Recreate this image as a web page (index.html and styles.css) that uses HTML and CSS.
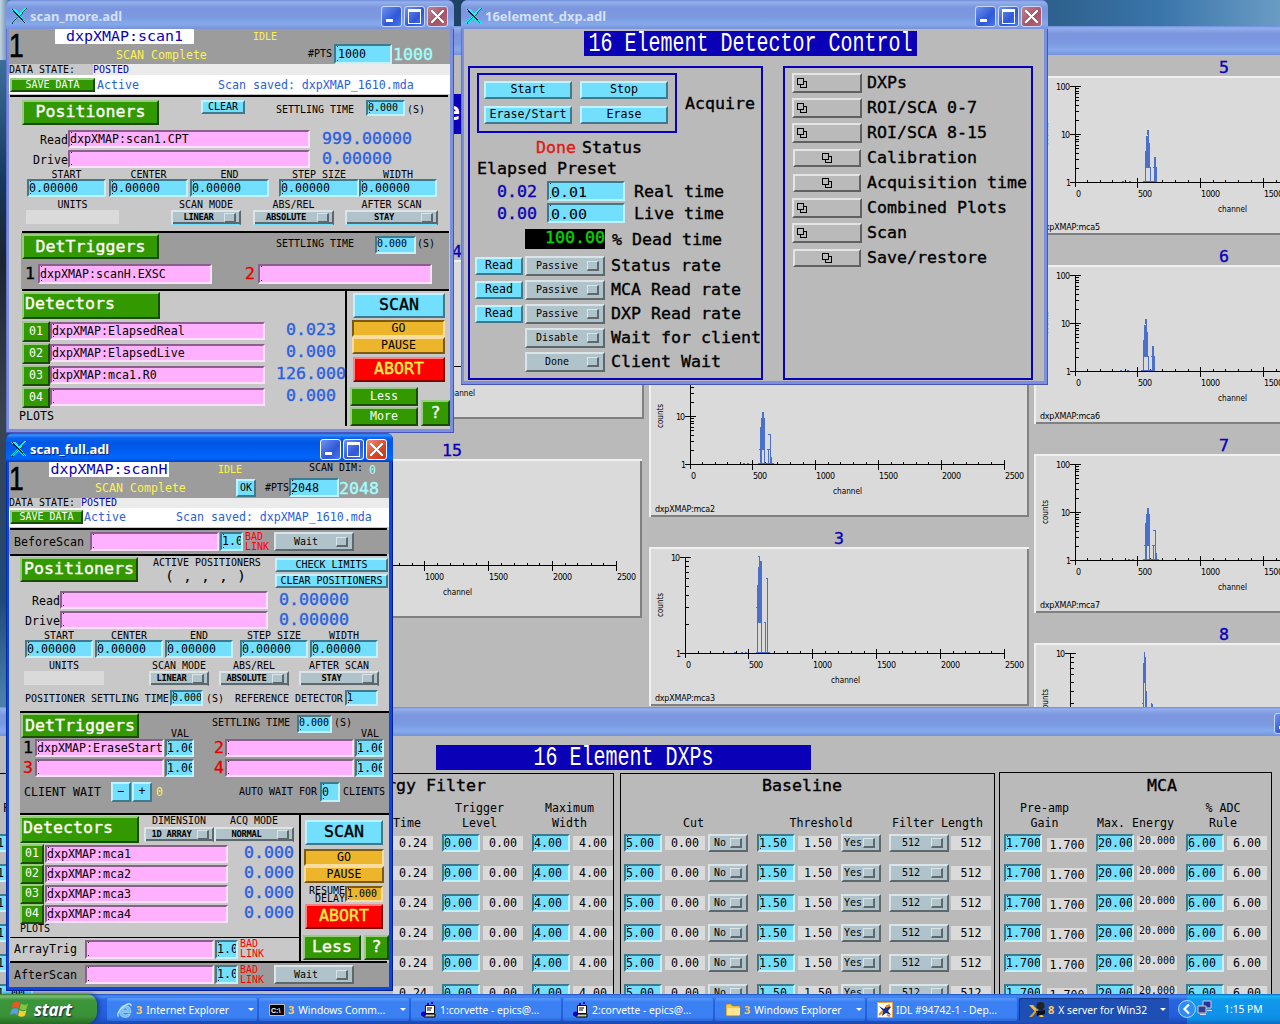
FILE: index.html
```html
<!DOCTYPE html>
<html lang="en">
<head>
<meta charset="utf-8">
<title>Beamline desktop</title>
<link rel="stylesheet" href="styles.css">
</head>
<body>
<svg width="0" height="0" class="defs">
  <defs>
    <g id="xlogo"><path d="M0 1h5l10 14h-3z" fill="#0ff"/><path d="M13 0h3L3 15H0z" fill="#0ff"/><path d="M1 1l13 14" stroke="#022" stroke-width="1.200" fill="none"/><path d="M15.500 0L9 8M7 9l-6 6.500" stroke="#022" stroke-width=".8" fill="none"/></g>
    <g id="stack"><path d="M.5 .5h6v6h-6zM3.500 6.500v3h6v-6h-3" fill="none" stroke="#000"/></g>
    <g id="peak-a" fill="#4a70cc"><path d="M111 69h1v37h-1zM112 60h4v32h-4zM113 54h2v10h-2zM115 65h1v41h-1zM112 92h1v14h-1zM110 91h2v1h-2zM119 76h2v1h-2zM121 76h1v30h-1zM118 91h3v1h-3zM119 91h1v15h-1zM122 99h1v7h-1zM109 105h16v1h-16zM94 105h2v1h-2zM98 105h2v1h-2z"/></g>
    <g id="peak-b" fill="#4a70cc"><path d="M113 54h1v5h-1zM114 54h1v38h-1zM112 60h2v32h-2zM111 75h1v31h-1zM115 67h1v25h-1zM116 91h1v15h-1zM120 81h2v25h-2zM122 91h1v15h-1zM119 91h2v1h-2zM109 105h12v1h-12zM88 105h2v1h-2zM95 105h2v1h-2z"/></g>
    <g id="peak-c" fill="#4a70cc"><path d="M109 9h2v1h-2zM110 9h1v67h-1zM111 14h2v62h-2zM109 20h1v56h-1zM108 38h1v68h-1zM107 60h2v1h-2zM112 14h1v92h-1zM116 76h1v30h-1zM115 75h2v1h-2zM118 31h1v75h-1zM117 31h2v1h-2zM107 105h14v1h-14zM85 105h2v1h-2zM92 105h2v1h-2zM96 105h2v1h-2z"/></g>
    <g id="peak-d" fill="#4a70cc"><path d="M110 9h1v30h-1zM109 20h2v20h-2zM111 14h1v50h-1zM109 30h1v40h-1zM108 60h2v1h-2zM112 48h1v20h-1zM117 60h1v20h-1zM118 61h1v10h-1z"/></g>
    <g id="axis-hundred">
      <path d="M41.500 10V111M36 106.500H355.500M36 10.500H47M36 58.500H47M103.500 102v10M166.500 102v10M229.500 102v10M292.500 102v10M355.500 102v10M42 92.500h3M42 83.500h3M42 77.500h3M42 72.500h3M42 69.500h3M42 65.500h3M42 63.500h3M42 60.500h3M42 44.500h3M42 35.500h3M42 29.500h3M42 24.500h3M42 21.500h3M42 17.500h3M42 15.500h3M42 12.500h3M53.500 104v3M66.500 104v3M78.500 104v3M91.500 104v3M116.500 104v3M128.500 104v3M141.500 104v3M154.500 104v3M179.500 104v3M191.500 104v3M204.500 104v3M217.500 104v3M242.500 104v3M254.500 104v3M267.500 104v3M279.500 104v3M304.500 104v3M317.500 104v3M329.500 104v3M342.500 104v3" class="axis"/>
      <g class="ticks"><text x="22" y="13.500" textLength="14">100</text><text x="27" y="61.500" textLength="9">10</text><text x="32" y="109.500">1</text>
      <text x="42" y="120.500">0</text><text x="104" y="120.500" textLength="14">500</text><text x="167" y="120.500" textLength="19">1000</text><text x="230" y="120.500" textLength="19">1500</text><text x="293" y="120.500" textLength="19">2000</text><text x="356" y="120.500" textLength="19">2500</text>
      <text x="184" y="135.500" textLength="29" lengthAdjust="spacingAndGlyphs">channel</text><text transform="translate(14 70) rotate(-90)" textLength="24" lengthAdjust="spacingAndGlyphs">counts</text></g>
    </g>
    <g id="axis-ten">
      <path d="M36.500 10V111M31 106.500H355.500M31 10.500H42M99.500 102v10M163.500 102v10M227.500 102v10M291.500 102v10M355.500 102v10M37 77.500h3M37 60.500h3M37 48.500h3M37 39.500h3M37 31.500h3M37 25.500h3M37 19.500h3M37 14.500h3M49.500 104v3M61.500 104v3M74.500 104v3M87.500 104v3M112.500 104v3M125.500 104v3M138.500 104v3M151.500 104v3M176.500 104v3M189.500 104v3M202.500 104v3M215.500 104v3M240.500 104v3M253.500 104v3M266.500 104v3M278.500 104v3M304.500 104v3M316.500 104v3M330.500 104v3M342.500 104v3" class="axis"/>
      <g class="ticks"><text x="22" y="13.500" textLength="9">10</text><text x="27" y="109.500">1</text>
      <text x="37" y="120.500">0</text><text x="100" y="120.500" textLength="14">500</text><text x="164" y="120.500" textLength="19">1000</text><text x="228" y="120.500" textLength="19">1500</text><text x="292" y="120.500" textLength="19">2000</text><text x="356" y="120.500" textLength="19">2500</text>
      <text x="182" y="135.500" textLength="29" lengthAdjust="spacingAndGlyphs">channel</text><text transform="translate(14 70) rotate(-90)" textLength="24" lengthAdjust="spacingAndGlyphs">counts</text></g>
    </g>
  </defs>
</svg>

<main class="desktop">

<section class="window spectra">
  <header class="titlebar"></header>
  <div class="spectra-body">
    <div class="plots plots-left">
      <div class="banner-edge">e</div>
      <div class="plot-no no14">14</div>
      <svg class="plot shift" viewBox="0 0 380 159"><use href="#axis-ten"/></svg>
      <div class="plot-no no15">15</div>
      <svg class="plot" viewBox="0 0 380 159"><use href="#axis-ten" x="-1"/></svg>
    </div>
    <div class="plots plots-mid">
      <div class="plot-no">2</div>
      <svg class="plot" viewBox="0 0 380 159"><use href="#axis-hundred"/><use href="#peak-a"/><text class="pv" x="6" y="153.500" textLength="60">dxpXMAP:mca2</text></svg>
      <div class="plot-no">3</div>
      <svg class="plot" viewBox="0 0 380 159"><use href="#axis-ten"/><use href="#peak-c"/><text class="pv" x="6" y="153.500" textLength="60">dxpXMAP:mca3</text></svg>
    </div>
    <div class="plots plots-right">
      <div class="plot-no first">5</div>
      <svg class="plot" viewBox="0 0 380 159"><use href="#axis-hundred"/><use href="#peak-b"/><text class="pv" x="6" y="153.500" textLength="60">dxpXMAP:mca5</text></svg>
      <div class="plot-no">6</div>
      <svg class="plot" viewBox="0 0 380 159"><use href="#axis-hundred"/><use href="#peak-b" x="-2"/><text class="pv" x="6" y="153.500" textLength="60">dxpXMAP:mca6</text></svg>
      <div class="plot-no">7</div>
      <svg class="plot" viewBox="0 0 380 159"><use href="#axis-hundred"/><use href="#peak-a"/><text class="pv" x="6" y="153.500" textLength="60">dxpXMAP:mca7</text></svg>
      <div class="plot-no">8</div>
      <svg class="plot" viewBox="0 0 380 159"><use href="#axis-ten"/><use href="#peak-d"/></svg>
    </div>
  </div>
</section>

<section class="window dxps">
  <header class="titlebar"><div class="wbtns"><i class="wb min"></i></div></header>
  <div class="dxps-body">
    <h1 class="banner"><span>16 Element DXPs</span></h1>
    <div class="groups">
      <div class="group filter">
        <h2>Energy Filter</h2>
        <div class="heads filter-heads"><span class="pk">Peaking<br>&nbsp;</span><span>Time</span><span class="c75">Trigger<br>Level</span><span class="c75">Maximum<br>Width</span></div>
        <div class="vals"><span class="entry">1.00</span><span class="read">0.24</span><span class="entry">0.00</span><span class="read">0.00</span><span class="entry">4.00</span><span class="read">4.00</span></div>
        <div class="vals"><span class="entry">1.00</span><span class="read">0.24</span><span class="entry">0.00</span><span class="read">0.00</span><span class="entry">4.00</span><span class="read">4.00</span></div>
        <div class="vals"><span class="entry">1.00</span><span class="read">0.24</span><span class="entry">0.00</span><span class="read">0.00</span><span class="entry">4.00</span><span class="read">4.00</span></div>
        <div class="vals"><span class="entry">1.00</span><span class="read">0.24</span><span class="entry">0.00</span><span class="read">0.00</span><span class="entry">4.00</span><span class="read">4.00</span></div>
        <div class="vals"><span class="entry">1.00</span><span class="read">0.24</span><span class="entry">0.00</span><span class="read">0.00</span><span class="entry">4.00</span><span class="read">4.00</span></div>
        <div class="vals"><span class="entry">1.00</span><span class="read">0.24</span><span class="entry">0.00</span><span class="read">0.00</span><span class="entry">4.00</span><span class="read">4.00</span></div>
      </div>
      <div class="group base">
        <h2>Baseline</h2>
        <div class="heads base-heads"><span>Cut</span><span>Threshold</span><span>Filter Length</span></div>
        <div class="vals"><span class="entry">5.00</span><span class="read">0.00</span><span class="menu">No</span><span class="entry">1.50</span><span class="read">1.50</span><span class="menu">Yes</span><span class="menu wide">512</span><span class="read">512</span></div>
        <div class="vals"><span class="entry">5.00</span><span class="read">0.00</span><span class="menu">No</span><span class="entry">1.50</span><span class="read">1.50</span><span class="menu">Yes</span><span class="menu wide">512</span><span class="read">512</span></div>
        <div class="vals"><span class="entry">5.00</span><span class="read">0.00</span><span class="menu">No</span><span class="entry">1.50</span><span class="read">1.50</span><span class="menu">Yes</span><span class="menu wide">512</span><span class="read">512</span></div>
        <div class="vals"><span class="entry">5.00</span><span class="read">0.00</span><span class="menu">No</span><span class="entry">1.50</span><span class="read">1.50</span><span class="menu">Yes</span><span class="menu wide">512</span><span class="read">512</span></div>
        <div class="vals"><span class="entry">5.00</span><span class="read">0.00</span><span class="menu">No</span><span class="entry">1.50</span><span class="read">1.50</span><span class="menu">Yes</span><span class="menu wide">512</span><span class="read">512</span></div>
        <div class="vals"><span class="entry">5.00</span><span class="read">0.00</span><span class="menu">No</span><span class="entry">1.50</span><span class="read">1.50</span><span class="menu">Yes</span><span class="menu wide">512</span><span class="read">512</span></div>
      </div>
      <div class="group mca">
        <h2>MCA</h2>
        <div class="heads mca-heads"><span>Pre-amp<br>Gain</span><span>Max. Energy</span><span>% ADC<br>Rule</span></div>
        <div class="vals"><span class="entry">1.700</span><span class="read low">1.700</span><span class="entry">20.000</span><span class="read tiny">20.000</span><span class="entry">6.00</span><span class="read">6.00</span></div>
        <div class="vals"><span class="entry">1.700</span><span class="read low">1.700</span><span class="entry">20.000</span><span class="read tiny">20.000</span><span class="entry">6.00</span><span class="read">6.00</span></div>
        <div class="vals"><span class="entry">1.700</span><span class="read low">1.700</span><span class="entry">20.000</span><span class="read tiny">20.000</span><span class="entry">6.00</span><span class="read">6.00</span></div>
        <div class="vals"><span class="entry">1.700</span><span class="read low">1.700</span><span class="entry">20.000</span><span class="read tiny">20.000</span><span class="entry">6.00</span><span class="read">6.00</span></div>
        <div class="vals"><span class="entry">1.700</span><span class="read low">1.700</span><span class="entry">20.000</span><span class="read tiny">20.000</span><span class="entry">6.00</span><span class="read">6.00</span></div>
        <div class="vals"><span class="entry">1.700</span><span class="read low">1.700</span><span class="entry">20.000</span><span class="read tiny">20.000</span><span class="entry">6.00</span><span class="read">6.00</span></div>
      </div>
    </div>
  </div>
</section>

<section class="window control">
  <header class="titlebar"><svg class="xicon" viewBox="0 0 16 16"><use href="#xlogo"/></svg><span class="wt">16element_dxp.adl</span><div class="wbtns"><i class="wb min"></i><i class="wb max"></i><i class="wb close"></i></div></header>
  <div class="control-body">
    <h1 class="banner"><span>16 Element Detector Control</span></h1>
    <div class="boxes">
      <div class="box left">
        <div class="acq-row">
          <div class="acq"><button>Start</button><button>Stop</button><button>Erase/Start</button><button>Erase</button></div>
          <span>Acquire</span>
        </div>
        <div class="status"><span class="red">Done</span><span>Status</span></div>
        <div class="ep">Elapsed Preset</div>
        <div class="timing"><span class="blue">0.02</span><span class="entry">0.01</span><span>Real time</span></div>
        <div class="timing"><span class="blue">0.00</span><span class="entry">0.00</span><span>Live time</span></div>
        <div class="dead"><span class="lcd">100.00</span><span>% Dead time</span></div>
        <div class="rate"><button>Read</button><span class="menu">Passive</span><span>Status rate</span></div>
        <div class="rate"><button>Read</button><span class="menu">Passive</span><span>MCA Read rate</span></div>
        <div class="rate"><button>Read</button><span class="menu">Passive</span><span>DXP Read rate</span></div>
        <div class="rate"><i></i><span class="menu">Disable</span><span>Wait for client</span></div>
        <div class="rate"><i></i><span class="menu">Done</span><span>Client Wait</span></div>
      </div>
      <div class="box right">
        <div class="link"><button><svg viewBox="0 0 10 10"><use href="#stack"/></svg></button>DXPs</div>
        <div class="link"><button><svg viewBox="0 0 10 10"><use href="#stack"/></svg></button>ROI/SCA 0-7</div>
        <div class="link"><button><svg viewBox="0 0 10 10"><use href="#stack"/></svg></button>ROI/SCA 8-15</div>
        <div class="link"><button class="mid"><svg viewBox="0 0 10 10"><use href="#stack"/></svg></button>Calibration</div>
        <div class="link"><button class="mid"><svg viewBox="0 0 10 10"><use href="#stack"/></svg></button>Acquisition time</div>
        <div class="link"><button><svg viewBox="0 0 10 10"><use href="#stack"/></svg></button>Combined Plots</div>
        <div class="link"><button><svg viewBox="0 0 10 10"><use href="#stack"/></svg></button>Scan</div>
        <div class="link"><button class="mid"><svg viewBox="0 0 10 10"><use href="#stack"/></svg></button>Save/restore</div>
      </div>
    </div>
  </div>
</section>

<section class="window more">
  <header class="titlebar"><svg class="xicon" viewBox="0 0 16 16"><use href="#xlogo"/></svg><span class="wt">scan_more.adl</span><div class="wbtns"><i class="wb min"></i><i class="wb max"></i><i class="wb close"></i></div></header>
  <div class="scan-body">
    <div class="head"><span class="big">1</span>
      <div class="head-main">
        <div class="h1row"><span class="pvname">dxpXMAP:scan1</span><span class="yellow">IDLE</span></div>
        <div class="h2row"><span class="yellow f7">SCAN Complete</span><span>#PTS</span><span class="entry">1000</span><span class="aqua">1000</span></div>
      </div>
    </div>
    <div class="state"><span>DATA STATE:</span><span class="posted">POSTED</span></div>
    <div class="save"><button class="green">SAVE DATA</button><span>Active</span><span>Scan saved: dxpXMAP_1610.mda</span></div>
    <hr class="full">
    <div class="pos"><button class="green f10">Positioners</button><button>CLEAR</button><span>SETTLING TIME</span><span class="entry small">0.000</span><span>(S)</span></div>
    <div class="rd"><label>Read</label><span class="entry pink">dxpXMAP:scan1.CPT</span><span class="num">999.00000</span></div>
    <div class="rd"><label>Drive</label><span class="entry pink"></span><span class="num">0.00000</span></div>
    <div class="limits labels"><span>START</span><span>CENTER</span><span>END</span><span>STEP SIZE</span><span>WIDTH</span></div>
    <div class="limits"><span class="entry">0.00000</span><span class="entry">0.00000</span><span class="entry">0.00000</span><span class="entry">0.00000</span><span class="entry">0.00000</span></div>
    <div class="modes labels"><span>UNITS</span><span>SCAN MODE</span><span>ABS/REL</span><span>AFTER SCAN</span></div>
    <div class="modes"><span class="units"></span><span class="menu under">LINEAR</span><span class="menu under">ABSOLUTE</span><span class="menu under">STAY</span></div>
    <hr>
    <div class="trig">
      <div class="trig-head"><button class="green f10">DetTriggers</button><span>SETTLING TIME</span><span class="entry small">0.000</span><span>(S)</span></div>
      <div class="trig-row"><span class="f10">1</span><span class="entry pink">dxpXMAP:scanH.EXSC</span><span class="f10 red">2</span><span class="entry pink"></span></div>
    </div>
    <hr>
    <div class="bottom">
      <div class="dets">
        <button class="green f10 det-title">Detectors</button>
        <div class="det"><button class="green">01</button><span class="entry pink">dxpXMAP:ElapsedReal</span><span class="num">0.023</span></div>
        <div class="det"><button class="green">02</button><span class="entry pink">dxpXMAP:ElapsedLive</span><span class="num">0.000</span></div>
        <div class="det"><button class="green">03</button><span class="entry pink">dxpXMAP:mca1.R0</span><span class="num">126.000</span></div>
        <div class="det"><button class="green">04</button><span class="entry pink"></span><span class="num">0.000</span></div>
        <div class="plots-label">PLOTS</div>
      </div>
      <div class="actions">
        <button class="scan">SCAN</button>
        <button class="amber pressed">GO</button>
        <button class="amber">PAUSE</button>
        <button class="abort">ABORT</button>
        <div class="lm"><div class="lm-col"><button class="green">Less</button><button class="green">More</button></div><button class="green help">?</button></div>
      </div>
    </div>
  </div>
</section>

<section class="window fullscan">
  <header class="titlebar"><svg class="xicon" viewBox="0 0 16 16"><use href="#xlogo"/></svg><span class="wt">scan_full.adl</span><div class="wbtns"><i class="wb min"></i><i class="wb max"></i><i class="wb close"></i></div></header>
  <div class="scan-body">
    <div class="head"><span class="big">1</span>
      <div class="head-main">
        <div class="h1row"><span class="pvname">dxpXMAP:scanH</span><span class="yellow">IDLE</span><span>SCAN DIM:</span><span class="dim">0</span></div>
        <div class="h2row"><span class="yellow f7">SCAN Complete</span><button>OK</button><span>#PTS</span><span class="entry">2048</span><span class="aqua">2048</span></div>
      </div>
    </div>
    <div class="state"><span>DATA STATE:</span><span class="posted">POSTED</span></div>
    <div class="save"><button class="green">SAVE DATA</button><span>Active</span><span>Scan saved: dxpXMAP_1610.mda</span></div>
    <hr class="full">
    <div class="hook dark before"><label>BeforeScan</label><span class="entry pink"></span><span class="entry cmd">1.00</span><span class="bad">BAD<br>LINK</span><span class="menu">Wait</span></div>
    <hr class="full tight">
    <div class="pos"><button class="green f10">Positioners</button><div class="active"><span>ACTIVE POSITIONERS</span><span class="f9">( , , , )</span></div><div class="checks"><button>CHECK LIMITS</button><button>CLEAR POSITIONERS</button></div></div>
    <div class="rd"><label>Read</label><span class="entry pink"></span><span class="num">0.00000</span></div>
    <div class="rd"><label>Drive</label><span class="entry pink"></span><span class="num">0.00000</span></div>
    <div class="limits labels"><span>START</span><span>CENTER</span><span>END</span><span>STEP SIZE</span><span>WIDTH</span></div>
    <div class="limits"><span class="entry">0.00000</span><span class="entry">0.00000</span><span class="entry">0.00000</span><span class="entry">0.00000</span><span class="entry">0.00000</span></div>
    <div class="modes labels"><span>UNITS</span><span>SCAN MODE</span><span>ABS/REL</span><span>AFTER SCAN</span></div>
    <div class="modes"><span class="units"></span><span class="menu under">LINEAR</span><span class="menu under">ABSOLUTE</span><span class="menu under">STAY</span></div>
    <div class="settle"><span>POSITIONER SETTLING TIME</span><span class="entry small">0.000</span><span>(S)</span><span>REFERENCE DETECTOR</span><span class="entry small">1</span></div>
    <hr>
    <div class="trig">
      <div class="trig-head"><button class="green f10">DetTriggers</button><span class="val">VAL</span><span>SETTLING TIME</span><span class="entry small">0.000</span><span>(S)</span><span class="val">VAL</span></div>
      <div class="trig-row"><span class="f10">1</span><span class="entry pink">dxpXMAP:EraseStart</span><span class="entry cmd">1.00</span><span class="f10 red">2</span><span class="entry pink"></span><span class="entry cmd">1.00</span></div>
      <div class="trig-row"><span class="f10 red">3</span><span class="entry pink"></span><span class="entry cmd">1.00</span><span class="f10 red">4</span><span class="entry pink"></span><span class="entry cmd">1.00</span></div>
      <div class="client"><span class="f7">CLIENT WAIT</span><button>−</button><button>+</button><span class="f7 yellow">0</span><span>AUTO WAIT FOR</span><span class="entry">0</span><span>CLIENTS</span></div>
    </div>
    <hr>
    <div class="bottom">
      <div class="dets">
        <div class="det-head"><button class="green f10 det-title">Detectors</button>
          <div class="dd"><span>DIMENSION</span><span class="menu under">1D ARRAY</span></div>
          <div class="dd acqm"><span>ACQ MODE</span><span class="menu under">NORMAL</span></div></div>
        <div class="det"><button class="green">01</button><span class="entry pink">dxpXMAP:mca1</span><span class="num">0.000</span></div>
        <div class="det"><button class="green">02</button><span class="entry pink">dxpXMAP:mca2</span><span class="num">0.000</span></div>
        <div class="det"><button class="green">03</button><span class="entry pink">dxpXMAP:mca3</span><span class="num">0.000</span></div>
        <div class="det"><button class="green">04</button><span class="entry pink">dxpXMAP:mca4</span><span class="num">0.000</span></div>
        <div class="plots-label">PLOTS</div>
        <div class="hook array"><label>ArrayTrig</label><span class="entry pink"></span><span class="entry cmd">1.00</span><span class="bad">BAD<br>LINK</span></div>
      </div>
      <div class="actions">
        <button class="scan">SCAN</button>
        <button class="amber pressed">GO</button>
        <button class="amber">PAUSE</button>
        <div class="resume"><span>RESUME<br>DELAY</span><span class="entry small orange">1.000</span></div>
        <button class="abort">ABORT</button>
        <div class="lm"><button class="green f10 less">Less</button><button class="green help">?</button></div>
      </div>
    </div>
    <hr class="full tight">
    <div class="hook dark after"><label>AfterScan</label><span class="entry pink"></span><span class="entry cmd">1.00</span><span class="bad">BAD<br>LINK</span><span class="menu">Wait</span></div>
  </div>
</section>

<footer class="taskbar">
  <div class="start"><svg viewBox="0 0 20 18"><path d="M3 3q4-3 7 0L8.500 8.500q-3-2.500-7 0z" fill="#e8562a"/><path d="M11 3.500q4 2.500 7 0L16.500 9q-3 2.500-7 0z" fill="#7fc43c"/><path d="M1.500 9.500q4-2.500 7 0L7 15q-3-3-7 0z" fill="#5f9be8"/><path d="M9.500 10q3.500 2.500 7 0L15 15.500q-3.500 2.500-7 0z" fill="#f8cd30"/></svg><span>start</span></div>
  <div class="tasks">
    <div class="task"><svg viewBox="0 0 16 16"><path d="M14 10.500H5.500q.5 2.500 3 2.500 1.500 0 2-1h3q-1.500 3.500-5.200 3.500Q2.500 15 2.500 9.500 3 3.500 8.300 3.500q5.700 0 5.700 7zM5.500 8.200h5.200Q10.500 6 8.200 6t-2.700 2.200z" fill="#6cc0fa" stroke="#d8f0ff" stroke-width=".5"/><path d="M1.500 14.500Q-1 11 6 5t8.500-1" fill="none" stroke="#bfe6ff" stroke-width="1.300"/></svg><b>3</b><span>Internet Explorer</span><i class="arr"></i></div>
    <div class="task"><svg viewBox="0 0 16 16"><path d="M.5 2.500h15v11H.5z" fill="#000" stroke="#bbb"/><text x="2" y="10.500" class="cmdtxt">C:\</text></svg><b>3</b><span>Windows Comm...</span><i class="arr"></i></div>
    <div class="task"><svg viewBox="0 0 16 16"><path d="M4.500 3.500h9v8h-9z" fill="#fff" stroke="#000"/><path d="M6 6h5M6 8h4" stroke="#000"/><path d="M2 12h12v3H3z" fill="#c8c8a8" stroke="#000"/><circle cx="2.500" cy="12" r="2.500" fill="#00c"/><path d="M6 2h2M10 1h2" stroke="#00c" stroke-width="2"/></svg><span>1:corvette - epics@...</span></div>
    <div class="task"><svg viewBox="0 0 16 16"><path d="M4.500 3.500h9v8h-9z" fill="#fff" stroke="#000"/><path d="M6 6h5M6 8h4" stroke="#000"/><path d="M2 12h12v3H3z" fill="#c8c8a8" stroke="#000"/><circle cx="2.500" cy="12" r="2.500" fill="#00c"/><path d="M6 2h2M10 1h2" stroke="#00c" stroke-width="2"/></svg><span>2:corvette - epics@...</span></div>
    <div class="task"><svg viewBox="0 0 16 16"><path d="M1 3.500q0-1.500 1.500-1.500h3.500l1.500 2H14q1 0 1 1V13q0 1-1 1H2q-1 0-1-1z" fill="#f5c94c" stroke="#a87a10" stroke-width=".6"/><path d="M2 6h13v7H2z" fill="#fde68e"/></svg><b>3</b><span>Windows Explorer</span><i class="arr"></i></div>
    <div class="task"><svg viewBox="0 0 16 16"><path d="M.5 .5h15v15H.5z" fill="#fff" stroke="#f0a030"/><path d="M2 4l5 3 3-4 4 2-3 4 3 4-5-2-4 3 1-5z" fill="#1a2c80"/><path d="M2 13l4-4M9 5l4-2M10 13l3 1" stroke="#e08a20" stroke-width="2"/></svg><span>IDL #94742-1 - Dep...</span></div>
    <div class="task on"><svg viewBox="0 0 16 16"><path d="M0 3h4l11 12h-4z" fill="#f4c030"/><path d="M14 3L3 15H0L11 3z" fill="#d8a020"/><circle cx="11.500" cy="4" r="4" fill="#222"/><path d="M7 9l9-1v4l-8 2z" fill="#111"/></svg><b>8</b><span>X server for Win32</span><i class="arr"></i></div>
  </div>
  <div class="tray"><svg class="chev" viewBox="0 0 20 20"><circle cx="10" cy="10" r="8.500" fill="#2f8df0" stroke="#a9d8ff"/><path d="M12 5.500L7.500 10l4.500 4.500" fill="none" stroke="#fff" stroke-width="2.200"/></svg><svg class="net" viewBox="0 0 16 16"><path d="M6 1h8v7H6z" fill="#26349a" stroke="#ccd"/><path d="M1 6h8v7H1z" fill="#303c8c" stroke="#ccd"/><path d="M3 14.500h6M10 10.500h5" stroke="#dde"/></svg><span>1:15 PM</span></div>
</footer>
</main>
</body>
</html>
```
FILE: styles.css
```css
* { box-sizing: border-box; }
body { margin: 0; width: 1280px; height: 1024px; overflow: hidden; }
.defs { display: block; height: 0; }
.desktop {
  position: relative; width: 1280px; height: 1024px; overflow: hidden;
  background: linear-gradient(90deg, #c4d4e2 0, #2a6490 12px, #1d3f63 400px, #2f628f 1060px, #3a75aa 1160px, #6a9cc4 1280px) 0 0 / 100% 60px no-repeat, linear-gradient(#3c6f9c 60px, #16385c 180px, #1c2430 260px, #3a4450 420px, #1f4a78 600px, #4a80a8 700px);
  font: 9.966px "DejaVu Sans Mono", "Liberation Mono", monospace; color: #000;
}
h1, h2, hr { margin: 0; border: 0; font-weight: normal; }
span, label, button { white-space: pre; }

/* window frames */
.window { position: absolute; overflow: hidden; background: #7b8fe0; padding: 0 4px 4px 3px; border-radius: 7px 7px 0 0; display: flex; flex-direction: column; box-shadow: inset -1px -1px #4a55b8, inset 1px 0 #6474cc; }
.titlebar { flex: none; height: 29px; margin: 0 -4px 0 -3px; padding: 3px 6px 0 5px; display: flex; align-items: center; background: linear-gradient(#6f8bd8 0, #93b0ee 2px, #8aa6e6 4px, #7b96df 8px, #7b98e0 17px, #84aaeb 24px, #7890dc 29px); }
.xicon { width: 16px; height: 16px; margin-right: 3px; flex: none; }
.wt { font: bold 12.950px "Noto Sans", sans-serif; color: #d6e1f8; line-height: 18px; }
.wbtns { margin-left: auto; display: flex; gap: 2px; }
.wb { width: 21px; height: 21px; border: 1px solid #c8d6f8; border-radius: 3px; background: linear-gradient(135deg, #6f93ee, #2f57d8 60%, #4878ee); display: flex; }
.wb::before { content: ""; margin: auto; }
.min::before { width: 7px; height: 3px; background: #fff; margin: 12px 0 0 4px; }
.max::before { width: 11px; height: 11px; border: 1px solid #fff; border-top-width: 3px; }
.close { background: linear-gradient(135deg, #c08090, #a85468 60%, #b86474); }
.close::before { width: 13px; height: 13px; background: linear-gradient(45deg, transparent 43%, #fff 43%, #fff 57%, transparent 57%), linear-gradient(-45deg, transparent 43%, #fff 43%, #fff 57%, transparent 57%); }

/* controls */
button { font: inherit; color: #000; padding: 0; margin: 0; background: #73dfff; border: 2px solid; border-color: #c0f2ff #3f7a8c #3f7a8c #c0f2ff; display: flex; align-items: center; justify-content: center; overflow: hidden; line-height: 1; }
.green { background: #339900; color: #fff; border-color: #98cc80 #1a4c00 #1a4c00 #98cc80; }
.amber { background: #edb52b; border-color: #f8dca0 #7c5a10 #7c5a10 #f8dca0; }
.pressed { border-color: #7c5a10 #f8dca0 #f8dca0 #7c5a10; }
.abort { background: #f00; color: #fff04a; border-color: #ff8080 #800000 #800000 #ff8080; }
.entry { font-size: 11.627px; display: block; height: 18px; line-height: 15px; overflow: hidden; padding-left: 0; border: 2px solid; border-color: #3f7a8c #c0f2ff #c0f2ff #3f7a8c;
  background: linear-gradient(#000, #000) 1px 0 / 1px 1px no-repeat, linear-gradient(#000, #000) 1px calc(100% - 1px) / 1px 1px no-repeat, #73dfff; }
.small { font-size: 9.966px; line-height: 11px; }
.pink { background-color: #ffb0ff; border-color: #8b5f8b #ffe0ff #ffe0ff #8b5f8b; }
.orange { background-color: #edb52b; border-color: #7c5a10 #f8dca0 #f8dca0 #7c5a10; }
.menu { display: flex; align-items: center; background: #b0c3ca; border: 2px solid; border-color: #dbe5e8 #5d686c #5d686c #dbe5e8; text-align: center; justify-content: center; line-height: 1; padding-right: 4px; }
.menu::after { content: ""; width: 9px; height: 7px; flex: none; margin-left: auto; border: 1px solid; border-width: 1px 2px 2px 1px; border-color: #dbe5e8 #5d686c #5d686c #dbe5e8; }
.menu::before { content: ""; margin-left: auto; }
.under { border-bottom: 1px solid #73dfff; box-shadow: inset 0 -2px #5d686c; font-weight: bold; font-size: 8.800px; letter-spacing: -.3px; padding-right: 3px; padding-bottom: 1px; }
.f7 { font-size: 11.627px; } .f9 { font-size: 14.949px; } .f10 { font-size: 16.610px; }
.f10, .num, .aqua, .actions .scan, .actions .abort, .help, .boxes, .group h2, .plot-no { -webkit-text-stroke: .35px; }
.acq, .boxes .entry, .rate button, .rate .menu { -webkit-text-stroke: 0; }
.red { color: #e80000; } .yellow { color: #fbf34a; }
.num { font-size: 16.610px; color: #2a60e0; line-height: 17px; }

.banner { background: #0a00b8; color: #fff; height: 25px; display: flex; align-items: center; justify-content: center; }
.banner span { font: 20px "Liberation Mono", monospace; transform: scaleY(1.350); }

/* spectra */
.spectra { left: 250px; top: 26px; width: 1180px; height: 760px; background: #bababa; }
.spectra-body { display: flex; padding-left: 9px; }
.plots { width: 380px; flex: none; display: flex; flex-direction: column; }
.plots-mid { margin-left: 7px; padding-top: 273px; }
.plots-right { margin-left: 5px; }
.banner-edge { margin-top: 39px; height: 40px; background: #0a00b8; color: #fff; font: bold 24px/36px "DejaVu Sans Mono", monospace; text-align: right; padding-right: 182px; }
.plot-no { font-size: 16.610px; height: 30px; line-height: 16px; padding-top: 14px; text-align: center; color: #0a00b8; }
.plot-no.first { height: 21px; padding-top: 5px; }
.no14 { margin-top: 96px; }
.no15 { height: 40px; padding-top: 24px; }
.plot { width: 380px; height: 159px; flex: none; background: #dadada; box-shadow: inset 2px 2px #f0f0f0, inset -2px -2px #808080; }
.shift { margin-left: 2px; }
.axis { stroke: #000; fill: none; shape-rendering: crispEdges; }
.ticks, .pv { font: 8px "DejaVu Sans", sans-serif; }
use { shape-rendering: crispEdges; }

/* DXP table */
.dxps { left: -20px; top: 707px; width: 1320px; height: 330px; background: #bababa; padding: 0 4px; border-radius: 0; }
.dxps .titlebar { height: 29px; padding-right: 5px; }
.banner { flex: none; }
.dxps .banner { margin: 9px 0 3px 452px; width: 375px; }
.groups { display: flex; align-items: flex-start; margin-left: 10px; }
.group { border: 1px solid #000; height: 300px; flex: none; font-size: 11.627px; }
.group h2 { font-size: 16.610px; line-height: 24px; height: 26px; text-align: center; }
.heads { display: grid; height: 34px; line-height: 15px; align-items: end; padding-bottom: 3px; text-align: center; }
.vals { display: grid; height: 30px; align-items: start; }
.vals .entry { width: 38px; }
.read { width: 40px; height: 14px; margin-top: 2px; background: #dadada; text-align: center; line-height: 15px; overflow: hidden; }
.vals .menu { width: 40px; height: 18px; font-size: 9.966px; }
.vals .wide { width: 60px; }
.low { margin-top: 4px; }
.tiny { font-size: 9.966px; line-height: 10px; }
.filter { width: 620px; }
.filter h2 { text-align: left; padding-left: 361px; }
.filter .vals { grid-template-columns: 398px 49px 41px 49px 41px 40px; }
.filter-heads { grid-template-columns: 398px 49px 90px 90px; text-align: left; }
.pk { padding-left: 8px; }
.c75 { width: 75px; text-align: center; }
.base { width: 375px; margin-left: 6px; }
.base h2 { padding-right: 11px; }
.base .vals { padding-left: 3px; grid-template-columns: 41px 43px 49px 41px 43px 48px 62px 40px; }
.base-heads { padding-left: 3px; grid-template-columns: 139px 126px 97px; }
.base-heads span:nth-child(2) { margin-left: -10px; }
.mca { width: 273px; margin: -1px 0 0 4px; padding-top: 1px; }
.mca h2 { padding-left: 53px; }
.mca .vals { padding-left: 4px; grid-template-columns: 43px 49px 41px 49px 41px 40px; }
.mca-heads { padding-left: 4px; grid-template-columns: 81px 85px 74px; column-gap: 8px; }

/* detector control */
.control { left: 461px; top: 0; width: 587px; height: 385px; }
.control-body { background: #bababa; flex: 1; padding: 2px 0 0 4px; }
.control .banner { margin: 0 0 10px 116px; width: 333px; }
.boxes { display: flex; gap: 20px; font-size: 16.610px; }
.box { border: 2px solid #0a00b8; height: 314px; }
.box.left { width: 295px; }
.box.right { width: 250px; padding: 5px 0 0 7px; }
.acq-row { display: flex; gap: 8px; padding: 5px 0 0 7px; line-height: 61px; }
.acq { width: 200px; height: 60px; border: 2px solid #0a00b8; padding: 6px 0 0 5px; display: grid; grid-template-columns: 88px 88px; column-gap: 8px; row-gap: 7px; grid-auto-rows: 18px; font-size: 11.627px; }
.status { padding-left: 66px; display: flex; gap: 6px; height: 26px; line-height: 27px; }
.status .red { color: #e01818; }
.ep { padding-left: 7px; height: 21px; line-height: 18px; }
.timing { display: grid; grid-template-columns: 50px 87px auto; padding-left: 27px; height: 22px; line-height: 21px; }
.blue { color: #0a00b8; }
.timing .entry { width: 78px; height: 20px; font-size: 14.949px; line-height: 18px; padding-left: 2px; }
.dead { display: grid; grid-template-columns: 87px auto; padding: 4px 0 0 55px; height: 30px; line-height: 21px; }
.lcd { background: #000; color: #00d800; width: 80px; height: 20px; text-align: right; line-height: 18px; }
.rate { display: grid; grid-template-columns: 50px 86px auto; align-items: center; height: 20px; margin-bottom: 4px; padding-left: 5px; line-height: 21px; }
.rate button { width: 48px; height: 18px; font-size: 11.627px; }
.rate .menu { width: 80px; height: 20px; font-size: 9.966px; }
.link { display: flex; align-items: center; gap: 5px; height: 20px; margin-bottom: 5px; line-height: 18px; }
.link button { width: 70px; height: 20px; background: #bababa; border-color: #e4e4e4 #606060 #606060 #e4e4e4; justify-content: flex-start; padding-left: 3px; }
.link svg { width: 10px; height: 10px; }
.link .mid { justify-content: center; width: 68px; height: 18px; margin: 0 1px; padding: 0; }

/* scan windows */
.scan-body { background: #c8c8c8; flex: 1; line-height: 10px; overflow: hidden; }
.head { display: flex; background: #9c9c9c; }
.big { width: 46px; height: 35px; font: 33px/34px "Liberation Sans", sans-serif; transform: scaleX(.800); transform-origin: 0 0; -webkit-text-stroke: .6px; }
.h1row, .h2row, .state, .save, .pos, .rd, .limits, .modes, .trig-head, .trig-row, .client, .settle, .hook { display: grid; align-items: center; }
.h1row { height: 15px; } .h2row { height: 20px; }
.h2row .f7 { padding-top: 2px; }
.pvname { background: #fff; color: #0a00b8; font-size: 14.949px; line-height: 15px; height: 15px; text-align: center; }
.aqua { color: #a0ffff; font-size: 16.610px; line-height: 18px; padding-top: 2px; }
.posted { color: #0a00b8; background: #ebebeb; line-height: 11px; }
.save { background: #fff; color: #2a60e0; font-size: 11.627px; padding-left: 1px; }
.save button { height: 14px; font-size: 9.966px; }
hr { height: 2px; background: #000; }
hr.full { margin: 1px 2px 0 1px; }
hr.tight { margin-top: 0; }
.pos, .trig-head { align-items: start; }
.pos > span, .trig-head > span { line-height: 20px; }
.pos > .entry, .trig-head > .entry { line-height: 11px; }
.rd { height: 20px; align-items: start; }
.rd label { font-size: 11.627px; text-align: right; line-height: 21px; }
.labels { text-align: center; }
.modes { align-items: start; }
.modes .menu { height: 15px; }
.units { background: #dadada; height: 14px; }
.trig { background: #9c9c9c; }
.trig .f10 { line-height: 20px; }
.bottom { display: flex; }
.dets { flex: none; }
.det { display: grid; align-items: start; }
.det button, .lm button { font-size: 11.627px; }
.det .num { text-align: center; }
.det-title.green { justify-content: flex-start; padding-left: 1px; height: 27px; padding-bottom: 3px; }
.actions { border-left: 2px solid #000; flex: 1; display: flex; flex-direction: column; font-size: 11.627px; }
.actions .scan, .actions .abort { height: 25px; font-size: 16.610px; }
.actions .amber { height: 17px; }
.lm { display: flex; }
.lm .help { font-size: 16.610px; }
.hook label { font-size: 11.627px; }
.bad { color: #f00; line-height: 10px; }
.dark { background: #9c9c9c; }

/* scan_more */
.more { left: 6px; top: 0; width: 448px; height: 433px; }
.more .h1row { grid-template-columns: 198px auto; }
.more .pvname { width: 139px; }
.more .h2row { grid-template-columns: 192px 26px 59px auto; padding-left: 61px; }
.more .h2row .entry { width: 58px; height: 20px; line-height: 17px; padding-left: 2px; }
.more .state { grid-template-columns: 84px auto; height: 11px; }
.more .save { grid-template-columns: 87px 121px auto; height: 19px; }
.more .save button { width: 85px; }
.more .pos { grid-template-columns: 179px 75px 90px 41px auto; padding: 3px 0 0 13px; height: 33px; }
.more .pos button { width: 44px; height: 14px; }
.more .pos .green, .more .trig-head .green { width: 137px; height: 25px; }
.more .pos .entry { width: 39px; height: 16px; }
.more .rd { grid-template-columns: 59px 254px auto; }
.more .rd .entry { width: 242px; }
.more .limits { grid-template-columns: 79px 79px 79px 80px 78px; padding-left: 18px; column-gap: 3px; height: 19px; align-items: start; }
.more .limits > :nth-child(3) { margin-left: -1px; margin-right: 1px; }
.more .limits > :nth-child(4) { margin-left: 6px; margin-right: -6px; }
.more .limits > :nth-child(5) { margin-left: 3px; margin-right: -3px; }
.more .limits.labels { height: 9px; line-height: 9px; }
.more .modes { padding-left: 17px; height: 21px; grid-template-columns: 93px 122px 93px 104px; }
.more .modes > :nth-child(2) { margin-left: 52px; }
.more .modes > :nth-child(3) { margin-left: 12px; }
.more .modes > :nth-child(4) { margin-left: 11px; }
.more .modes.labels { height: 12px; line-height: 13px; }
.more hr:not(.full) { margin: 0 1px 0 13px; }
.more .trig { margin: 0 1px 0 12px; height: 56px; padding-top: 1px; }
.more .trig-head { grid-template-columns: 254px 99px 42px auto; padding-left: 1px; height: 30px; }
.more .trig-head .entry { width: 41px; height: 18px; margin-top: 2px; }
.more .trig-row { grid-template-columns: 13px 207px 13px auto; padding-left: 4px; height: 20px; }
.more .trig-row .entry { width: 174px; height: 20px; line-height: 17px; }
.more .dets { width: 336px; padding: 1px 0 0 13px; }
.more .det-title { width: 138px; margin-bottom: 2px; }
.more .det { grid-template-columns: 28px 216px 90px; height: 22px; }
.more .det button { height: 21px; }
.more .det .entry { width: 215px; margin-top: 1px; }
.more .plots-label { font-size: 11.627px; line-height: 14px; margin-left: -3px; }
.more .actions { padding: 2px 0 0 6px; height: 135px; }
.more .actions > button { width: 92px; }
.more .actions > .amber { width: 93px; margin-left: -1px; }
.more .actions .scan { margin-bottom: 2px; }
.more .actions .abort { margin: 3px 0 5px; }
.more .lm { margin-left: -3px; gap: 3px; align-items: flex-end; }
.lm-col { display: grid; gap: 1px; grid-auto-rows: 19px; width: 68px; }
.more .help { width: 29px; height: 26px; }

/* scan_full */
.fullscan { left: 6px; top: 433px; width: 387px; height: 558px; background: #0a48e0; box-shadow: inset -1px -1px #001c90, inset 1px 0 #0028a8; }
.fullscan .titlebar { background: linear-gradient(#0a50d8 0, #3a90ff 2px, #0a62ee 5px, #0056e4 10px, #0060f4 20px, #0066fc 25px, #0040c8 29px); }
.fullscan .wt { color: #fff; text-shadow: 1px 1px #0a2a80; }
.fullscan .wb { border-color: #fff; }
.fullscan .close { background: linear-gradient(135deg, #f09078, #d8482a 60%, #c03818); }
.fullscan .head { height: 36px; }
.fullscan .big { width: 40px; }
.fullscan .h1row { grid-template-columns: 169px 91px 60px auto; }
.fullscan .h1row span:nth-child(3) { margin-top: -4px; }
.fullscan .dim { color: #a0ffff; font-size: 11.627px; }
.fullscan .pvname { width: 120px; }
.fullscan .h2row { grid-template-columns: 141px 29px 24px 50px auto; padding-left: 46px; height: 21px; }
.fullscan .h2row button { width: 20px; height: 18px; }
.fullscan .h2row .entry { width: 50px; height: 19px; line-height: 16px; }
.fullscan .h2row .f7 { padding-top: 0; }
.fullscan .state { grid-template-columns: 72px auto; height: 10px; }
.fullscan .posted { line-height: 10px; }
.fullscan .save { grid-template-columns: 74px 92px auto; height: 19px; padding-bottom: 2px; }
.fullscan .save button { width: 73px; }
.hook { grid-template-columns: 76px 130px 25px 29px auto; padding: 0 0 1px 5px; height: 24px; }
.hook .entry { width: 129px; height: 19px; }
.hook .cmd { width: 23px; }
.hook .menu { width: 80px; height: 19px; }
.fullscan .pos { grid-template-columns: 133px 122px auto; padding: 1px 0 0 11px; height: 35px; }
.fullscan .pos .green, .fullscan .trig-head .green { width: 118px; height: 25px; }
.active { display: grid; }
.active span { line-height: 12px; }
.active .f9 { padding-left: 12px; line-height: 14px; }
.checks { display: grid; grid-auto-rows: 14px; row-gap: 2px; width: 113px; padding-top: 1px; }
.fullscan .rd { grid-template-columns: 51px 219px auto; }
.fullscan .rd .entry { width: 208px; }
.fullscan .limits { grid-template-columns: 68px 68px 68px 68px 68px; column-gap: 2px; padding-left: 16px; height: 20px; align-items: start; }
.fullscan .limits > :nth-child(n+4) { margin-left: 5px; margin-right: -5px; }
.fullscan .limits.labels { height: 9px; line-height: 9px; }
.fullscan .modes { grid-template-columns: 80px 105px 80px 90px; padding-left: 15px; height: 19px; }
.fullscan .modes > :nth-child(2) { margin-left: 45px; }
.fullscan .modes > :nth-child(3) { margin-left: 10px; }
.fullscan .modes > :nth-child(4) { margin-left: 10px; }
.fullscan .modes.labels { height: 11px; line-height: 11px; }
.settle { grid-template-columns: 145px 36px 29px 110px auto; padding-left: 16px; height: 21px; align-items: start; line-height: 18px; }
.settle .entry { width: 33px; height: 16px; }
.fullscan hr:not(.full) { margin: 0 0 0 11px; }
.fullscan .trig { margin-left: 11px; height: 100px; }
.fullscan .trig-head { grid-template-columns: 150px 41px 85px 37px 27px auto; padding-left: 1px; height: 26px; }
.fullscan .trig-head .entry { width: 35px; height: 18px; margin-top: 2px; }
.trig-head .val { margin-top: 11px; }
.fullscan .trig-row { grid-template-columns: 12px 130px 49px 11px 130px auto; padding-left: 3px; height: 20px; align-items: start; }
.fullscan .trig-row .f10 { line-height: 17px; }
.fullscan .trig-row .entry { width: 129px; }
.fullscan .trig-row .cmd { width: 29px; }
.client { grid-template-columns: 87px 21px 24px 83px 81px 23px auto; padding-left: 4px; height: 26px; }
.client button { width: 20px; height: 20px; font-size: 11.627px; }
.client .entry { width: 20px; height: 20px; line-height: 17px; }
.fullscan .bottom { height: 146px; }
.fullscan .dets { width: 290px; padding-top: 1px; }
.det-head { display: flex; padding-left: 11px; height: 28px; }
.fullscan .det-title { width: 119px; }
.dd { width: 70px; margin-left: 5px; text-align: center; line-height: 9px; }
.dd .menu { height: 15px; margin-top: 2px; }
.dd.acqm { width: 80px; margin-left: 0; }
.fullscan .det { grid-template-columns: 25px 184px 80px; padding-left: 11px; height: 20px; }
.fullscan .det button { width: 24px; height: 20px; }
.fullscan .det .entry { width: 183px; margin-top: 1px; }
.fullscan .plots-label { padding-left: 11px; line-height: 9px; height: 13px; }
.fullscan .array { height: 24px; margin-left: 1px; border-top: 1px solid #000; padding-left: 4px; grid-template-columns: 71px 130px 25px auto; }
.after { grid-template-columns: 71px 130px 25px 34px auto; }
.fullscan .actions { padding: 5px 0 0 4px; height: 146px; flex: none; width: 90px; }
.fullscan .actions > button { width: 78px; flex: none; }
.fullscan .actions > .amber { width: 80px; margin-left: -1px; }
.fullscan .scan { margin-bottom: 4px; }
.resume { display: grid; grid-template-columns: 40px 38px; text-align: right; font-size: 9.966px; line-height: 8px; padding-top: 3px; height: 21px; flex: none; }
.resume .entry { text-align: left; height: 16px; }
.resume span:first-child { padding-top: 1px; }
.fullscan .abort { margin-bottom: 6px; }
.fullscan .lm { margin-left: -2px; gap: 3px; }
.fullscan .lm button { height: 25px; width: 25px; }
.fullscan .lm .less { width: 58px; font-size: 16.610px; }

/* taskbar */
.taskbar { position: absolute; left: 0; top: 994px; width: 1280px; height: 30px; display: flex; background: linear-gradient(#1c4ec0 0, #4a8df6 2px, #2866e2 6px, #245edc 22px, #1a48b0 30px); font: 10.300px "Noto Sans", sans-serif; color: #fff; }
.start { width: 97px; border-radius: 0 10px 12px 0; background: linear-gradient(#2f6f2c 0, #7cc076 2px, #3d963a 6px, #3a9238 22px, #256a24 30px); display: flex; align-items: center; padding-left: 10px; gap: 4px; box-shadow: 2px 0 4px #163a90; }
.start svg { width: 20px; height: 18px; }
.start span { font: italic bold 17px "Open Sans", sans-serif; text-shadow: 1px 1px 2px #123; letter-spacing: -.3px; }
.tasks { display: flex; gap: 2px; padding: 4px 0 3px 10px; }
.task { width: 150px; border-radius: 2px; background: linear-gradient(#5a9bff 0, #3c81f3 4px, #3b80f2 19px, #2a66d8 23px); display: flex; align-items: center; padding: 0 3px 0 10px; }
.task svg { width: 16px; height: 16px; margin-right: 3px; flex: none; }
.task b { color: #ffc65a; font-size: 11px; margin-right: 4px; }
.on { background: #1e4fb4; box-shadow: inset 1px 1px #143a8c; }
.arr { margin-left: auto; border: 3px solid transparent; border-top-color: #fff; border-bottom: 0; }
.cmdtxt { font: bold 7px "Liberation Sans", sans-serif; fill: #fff; }
.tray { margin-left: auto; width: 93px; background: linear-gradient(#0c60c0 0, #18b8f8 2px, #1098ec 6px, #0f90e8 24px, #0b6cc0 30px); display: flex; align-items: center; }
.chev { width: 20px; height: 20px; margin-left: -10px; flex: none; }
.net { width: 16px; height: 16px; margin: 0 11px 2px 0; }
```
